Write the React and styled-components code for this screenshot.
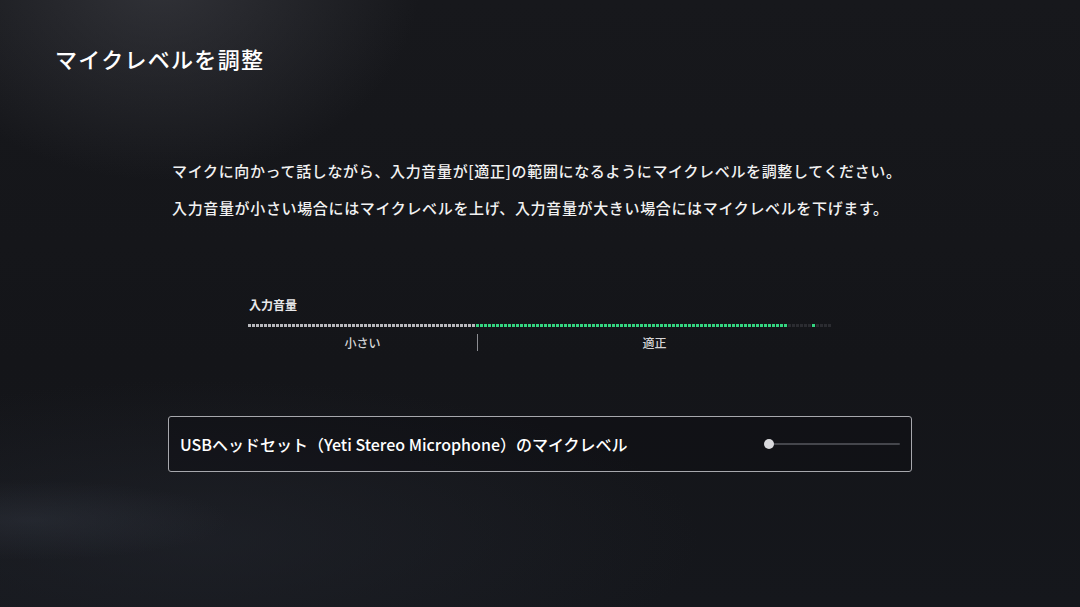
import React from "react";
import styled, { createGlobalStyle } from "styled-components";

const Global = createGlobalStyle`
  html, body { margin: 0; padding: 0; background: #15161b; }
  body { font-family: "Noto Sans CJK JP", "Noto Sans", sans-serif; }
  * { box-sizing: border-box; }
`;

const Page = styled.div`
  width: 1080px;
  height: 607px;
  overflow: hidden;
  color: #fff;
  display: flex;
  flex-direction: column;
  background:
    radial-gradient(ellipse 260px 200px at 160px -20px, rgba(70, 71, 78, 0.55), rgba(70, 71, 78, 0) 100%),
    radial-gradient(ellipse 200px 40px at 30px 520px, rgba(60, 66, 78, 0.3), rgba(60, 66, 78, 0) 100%),
    radial-gradient(ellipse 500px 160px at 200px 540px, rgba(35, 38, 46, 0.55), rgba(35, 38, 46, 0) 100%),
    linear-gradient(180deg, #17181c 0%, #141519 60%, #15171c 100%);
`;

const Title = styled.h1`
  margin: 45px 0 0 55px;
  font-size: 22px;
  line-height: 26px;
  font-weight: 500;
  letter-spacing: 1.3px;
  color: #fff;
`;

const Main = styled.div`
  margin-left: 168px;
  width: 744px;
  display: flex;
  flex-direction: column;
`;

const Instructions = styled.div`
  margin-top: 81px;
  padding-left: 4px;
  font-size: 15px;
  line-height: 37px;
  font-weight: 500;
  letter-spacing: 0.65px;
  color: #f2f2f2;
`;

const Line = styled.p`
  margin: 0;
  white-space: nowrap;
`;

const Meter = styled.div`
  margin: 71px 0 0 80px;
  width: 584px;
  display: flex;
  flex-direction: column;
`;

const MeterLabel = styled.div`
  padding-left: 1px;
  font-size: 12px;
  line-height: 16px;
  font-weight: 700;
  color: #e8e8ea;
`;

const Dots = styled.div`
  margin-top: 11px;
  display: flex;
  gap: 1px;
  height: 3px;
`;

const Dot = styled.span`
  width: 3px;
  height: 3px;
  flex: none;
  background: ${(p) =>
    p.$tone === "gray" ? "#b9b9bd" : p.$tone === "green" ? "#34d681" : "#2b2c31"};
`;

const Scale = styled.div`
  margin-top: 7px;
  display: grid;
  grid-template-columns: 229px 1fr;
  height: 17px;
  width: 583px;
`;

const ScaleZone = styled.div`
  display: flex;
  align-items: center;
  justify-content: center;
  font-size: 12px;
  font-weight: 500;
  color: #d4d4d6;
  ${(p) => (p.$divided ? "border-left: 1px solid #8c8d92;" : "")}
`;

const Row = styled.div`
  margin-top: 65px;
  height: 56px;
  display: flex;
  align-items: center;
  justify-content: space-between;
  padding: 0 11px 0 11px;
  border: 1.5px solid #a7a8ad;
  border-radius: 3px;
  background: rgba(12, 12, 16, 0.35);
`;

const RowText = styled.span`
  font-size: 16px;
  font-weight: 500;
  color: #fff;
  white-space: nowrap;
`;

const Slider = styled.div`
  position: relative;
  width: 131px;
  height: 10px;
  display: flex;
  align-items: center;
`;

const Track = styled.div`
  width: 100%;
  height: 2px;
  border-radius: 1px;
  background: #45464c;
`;

const Knob = styled.div`
  position: absolute;
  left: -5px;
  top: 0;
  width: 10px;
  height: 10px;
  border-radius: 50%;
  background: #d9d9dc;
`;

const dots = Array.from({ length: 146 }, (_, i) => {
  if (i <= 56) return "gray";
  if (i <= 134) return "green";
  if (i === 141) return "green";
  return "dark";
});

export default function App() {
  return (
    <>
      <Global />
      <Page>
        <Title>マイクレベルを調整</Title>
        <Main>
          <Instructions>
            <Line>マイクに向かって話しながら、入力音量が[適正]の範囲になるようにマイクレベルを調整してください。</Line>
            <Line>入力音量が小さい場合にはマイクレベルを上げ、入力音量が大きい場合にはマイクレベルを下げます。</Line>
          </Instructions>
          <Meter>
            <MeterLabel>入力音量</MeterLabel>
            <Dots>
              {dots.map((t, i) => (
                <Dot key={i} $tone={t} />
              ))}
            </Dots>
            <Scale>
              <ScaleZone>小さい</ScaleZone>
              <ScaleZone $divided>適正</ScaleZone>
            </Scale>
          </Meter>
          <Row>
            <RowText>USBヘッドセット（Yeti Stereo Microphone）のマイクレベル</RowText>
            <Slider>
              <Track />
              <Knob />
            </Slider>
          </Row>
        </Main>
      </Page>
    </>
  );
}
